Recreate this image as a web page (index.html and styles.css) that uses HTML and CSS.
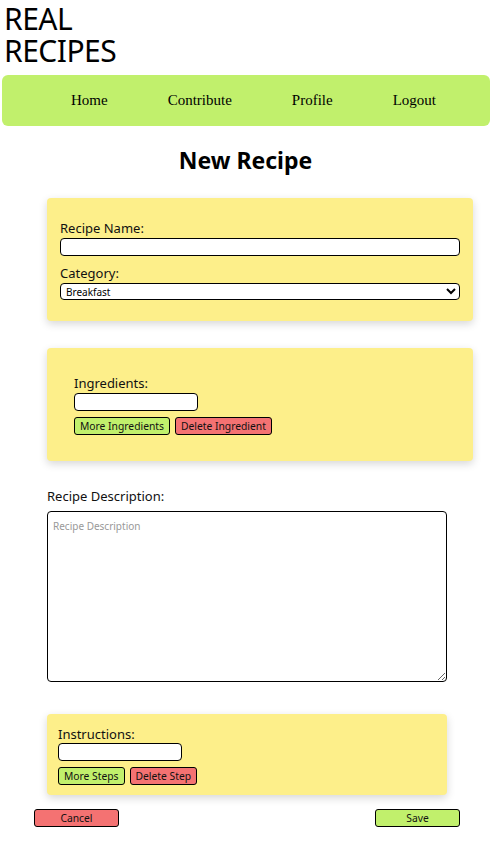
FILE: index.html
```html
<!DOCTYPE html>
<html>
<head>
<meta charset="utf-8">
<link rel="stylesheet" href="styles.css">
</head>
<body>
<header class="site-header">
  <h1 class="logo"><span class="logo-line">REAL</span><span class="logo-line">RECIPES</span></h1>
  <nav class="nav">
    <a class="nav-link" href="#">Home</a>
    <a class="nav-link" href="#">Contribute</a>
    <a class="nav-link" href="#">Profile</a>
    <a class="nav-link" href="#">Logout</a>
  </nav>
</header>
<main class="main">
  <h2 class="page-title">New Recipe</h2>
  <form class="recipe-form">
    <section class="card card-basic">
      <label class="label" for="name">Recipe Name:</label>
      <input class="input input-wide" id="name" type="text">
      <label class="label label-gap" for="cat">Category:</label>
      <select class="select" id="cat">
        <option>Breakfast</option>
      </select>
    </section>
    <section class="card card-ingredients">
      <label class="label" for="ing">Ingredients:</label>
      <input class="input input-short" id="ing" type="text">
      <div class="btn-row">
        <button type="button" class="btn btn-green">More Ingredients</button>
        <button type="button" class="btn btn-red">Delete Ingredient</button>
      </div>
    </section>
    <section class="desc">
      <label class="label label-tight" for="desc">Recipe Description:</label>
      <textarea class="textarea" id="desc" placeholder="Recipe Description"></textarea>
    </section>
    <section class="card card-steps">
      <label class="label label-tight" for="step">Instructions:</label>
      <input class="input input-short" id="step" type="text">
      <div class="btn-row">
        <button type="button" class="btn btn-green">More Steps</button>
        <button type="button" class="btn btn-red">Delete Step</button>
      </div>
    </section>
    <div class="actions">
      <button type="button" class="btn btn-red btn-action">Cancel</button>
      <button type="button" class="btn btn-green btn-action">Save</button>
    </div>
  </form>
</main>
</body>
</html>
```
FILE: styles.css
```css
* { box-sizing: border-box; }
html, body { margin: 0; padding: 0; background: #fff; }
body {
  font-family: "Noto Sans", "Open Sans", sans-serif;
  color: #000;
  width: 491px;
}
.site-header { padding: 3px 1px 0 2px; }
.logo {
  margin: 0 0 0 2px;
  font-family: "Noto Sans", sans-serif;
  font-weight: 400;
  font-size: 30px;
  line-height: 32px;
  letter-spacing: -0.5px;
}
.logo-line { display: block; height: 32px; }
.nav {
  margin-top: 8px;
  height: 51px;
  background: #c1f06c;
  border-radius: 6px;
  display: flex;
  align-items: center;
  padding-left: 69px;
  gap: 60px;
}
.nav-link {
  font-family: "Liberation Serif", "DejaVu Serif", serif;
  font-size: 15px;
  color: #000;
  text-decoration: none;
}
.page-title {
  margin: 20px 0 0 0;
  text-align: center;
  font-size: 23px;
  line-height: 28px;
  font-weight: 700;
}
.recipe-form {
  display: flex;
  flex-direction: column;
  align-items: flex-start;
}
.card {
  background: #fdef8a;
  border-radius: 4px;
  box-shadow: 0 3px 8px rgba(0,0,0,0.16);
  display: flex;
  flex-direction: column;
  align-items: flex-start;
  margin-left: 47px;
}
.card-basic { width: 426px; margin-top: 24px; padding: 21px 13px 21px; }
.card-ingredients { width: 426px; margin-top: 27px; padding: 26px 27px 26px; }
.card-steps { width: 400px; margin-top: 32px; padding: 11px 11px 10px; }
.label {
  font-size: 13px;
  line-height: 18px;
  margin-bottom: 1px;
  display: block;
  color: #111;
}
.label-tight { margin-bottom: 0; }
.label-gap { margin-top: 8px; }
.input {
  height: 18px;
  border: 1px solid #000;
  border-radius: 4px;
  background: #fff;
  padding: 0 3px;
  font-size: 11px;
  line-height: 16px;
  margin: 0;
}
.input-wide { width: 400px; }
.input-short { width: 124px; }
.select {
  width: 400px;
  height: 17px;
  border: 1px solid #000;
  border-radius: 4px;
  background: #fff;
  font-family: "Noto Sans", sans-serif;
  font-size: 10px;
  padding: 0 1px;
  margin: 0;
  color: #000;
}
.btn-row { display: flex; gap: 5px; margin-top: 6px; }
.btn {
  height: 18px;
  border: 1px solid #000;
  border-radius: 3px;
  padding: 0 5px;
  margin: 0;
  font-family: "Noto Sans", sans-serif;
  font-size: 10.3px;
  line-height: 15px;
  color: #111;
}
.btn-green { background: #c1f06c; }
.btn-red { background: #f47272; }
.desc {
  margin: 26px 0 0 47px;
  display: flex;
  flex-direction: column;
  gap: 6px;
}
.textarea {
  width: 400px;
  height: 171px;
  border: 1px solid #000;
  border-radius: 4px;
  padding: 7px 5px;
  margin: 0;
  font-family: "Noto Sans", sans-serif;
  font-size: 10px;
  resize: both;
}
.textarea::placeholder { color: #999; }
.actions {
  width: 426px;
  margin: 14px 0 0 34px;
  display: flex;
  justify-content: space-between;
}
.btn-action { width: 85px; }
```
